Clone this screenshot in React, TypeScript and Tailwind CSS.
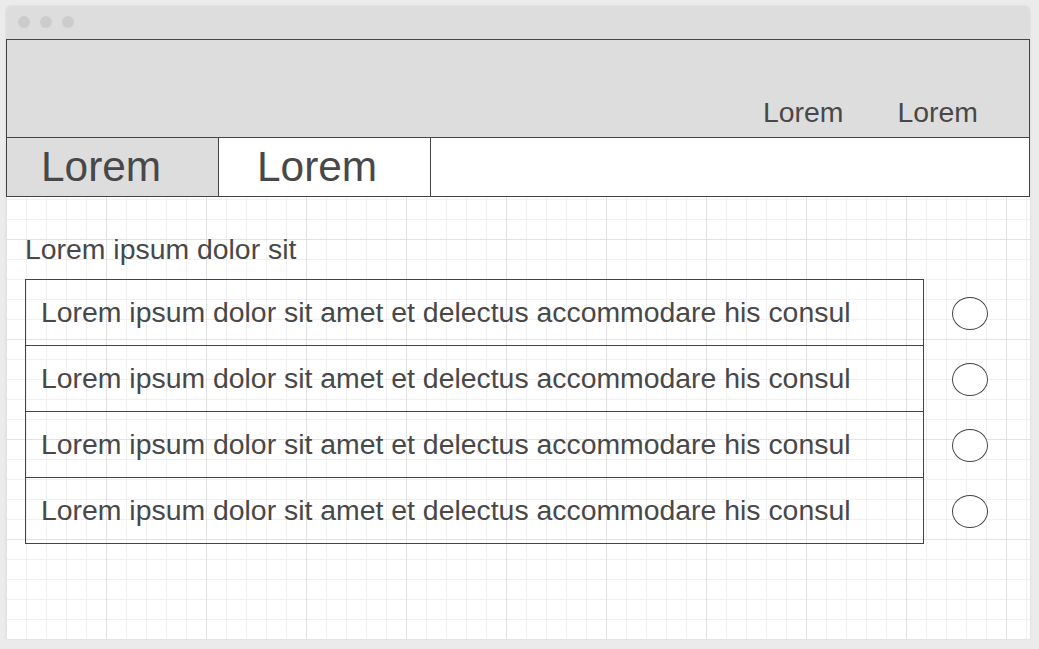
export default function App() {
  const rows = [0, 1, 2, 3];
  const text = "Lorem ipsum dolor sit amet et delectus accommodare his consul";
  return (
    <div className="min-h-screen w-full bg-[#ebebeb] p-[6px] font-['Liberation_Sans',Arial,sans-serif] text-[#484848]">
      <div className="w-[1024px] h-[633px] flex flex-col shadow-[0_0_2px_rgba(0,0,0,0.12)] rounded-t-[5px]">
        <div className="h-[33px] shrink-0 bg-[#dddddd] rounded-t-[5px] flex gap-[10px] pl-[12px] pt-[10px]">
          <div className="w-[12px] h-[12px] rounded-full bg-[#cccccc]" />
          <div className="w-[12px] h-[12px] rounded-full bg-[#cccccc]" />
          <div className="w-[12px] h-[12px] rounded-full bg-[#cccccc]" />
        </div>
        <div className="flex-1 bg-white bg-[image:linear-gradient(to_right,#e2e2e2_1px,transparent_1px),linear-gradient(to_bottom,#e2e2e2_1px,transparent_1px),linear-gradient(to_right,#f0f0f0_1px,transparent_1px),linear-gradient(to_bottom,#f0f0f0_1px,transparent_1px)] bg-[size:100px_100px,100px_100px,20px_20px,20px_20px]">
          <div className="h-[99px] border border-[#444] bg-[#dddddd] flex items-end justify-end gap-[54px] pr-[51px] pb-[9px]">
            <span className="text-[28.4px] leading-[32px]">Lorem</span>
            <span className="text-[28.4px] leading-[32px]">Lorem</span>
          </div>
          <div className="h-[59px] flex border-x border-b border-[#444] bg-white">
            <div className="w-[212px] bg-[#dddddd] border-r border-[#444] flex items-center pl-[34px] text-[42.4px] leading-none">Lorem</div>
            <div className="w-[212px] border-r border-[#444] flex items-center pl-[38px] text-[42.4px] leading-none">Lorem</div>
          </div>
          <div className="pl-[19px] pt-[36px]">
            <div className="text-[28.4px] leading-[32px]">Lorem ipsum dolor sit</div>
            <div className="flex mt-[14px] gap-[28px]">
              <div className="w-[899px] border border-[#444]">
                {rows.map((r) => (
                  <div
                    key={r}
                    className={
                      r === 0
                        ? "h-[65px] flex items-center pl-[15px] text-[28.4px] leading-none whitespace-nowrap"
                        : "h-[66px] border-t border-[#444] flex items-center pl-[15px] text-[28.4px] leading-none whitespace-nowrap"
                    }
                  >
                    {text}
                  </div>
                ))}
              </div>
              <div className="flex flex-col pt-[1px]">
                {rows.map((r) => (
                  <div key={r} className="h-[66px] flex items-center">
                    <div className="w-[36px] h-[33px] rounded-[50%] border border-[#444] bg-white" />
                  </div>
                ))}
              </div>
            </div>
          </div>
        </div>
      </div>
    </div>
  );
}
